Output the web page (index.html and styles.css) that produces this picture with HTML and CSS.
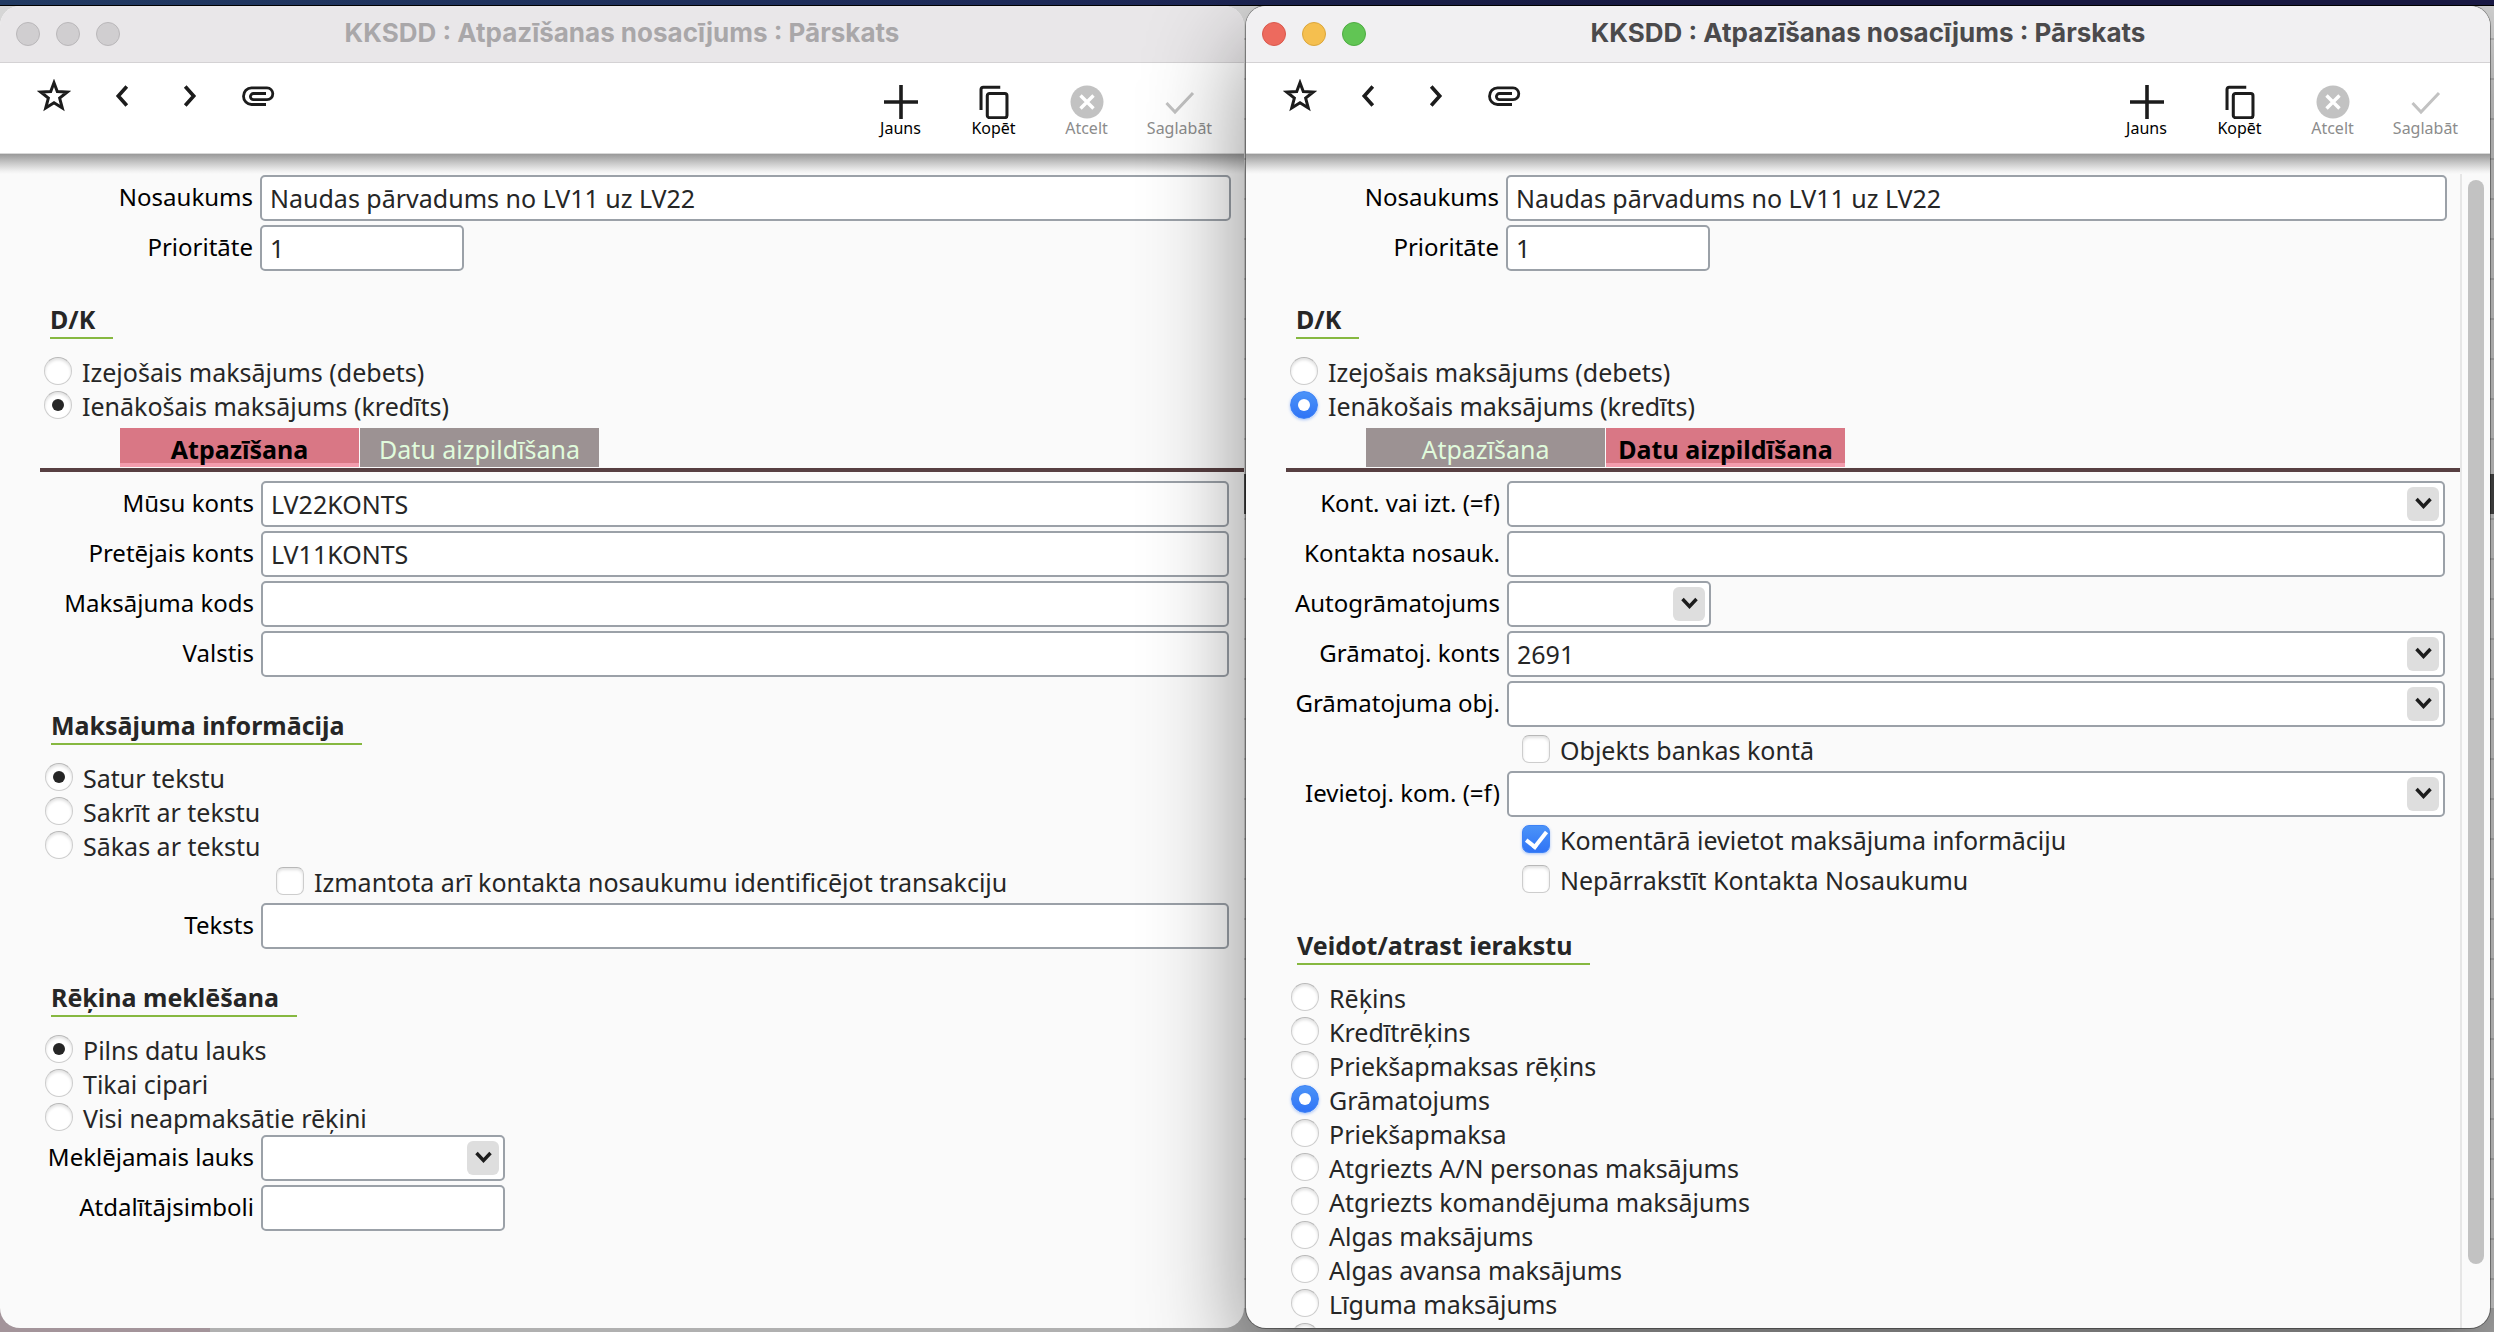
FILE: index.html
```html
<!DOCTYPE html>
<html lang="lv">
<head>
<meta charset="utf-8">
<title>KKSDD : Atpazīšanas nosacījums : Pārskats</title>
<link rel="stylesheet" href="styles.css">
</head>
<body>
<svg class="sprite" aria-hidden="true">
  <symbol id="i-star" viewBox="0 0 32 32"><path d="M16 3.500l3.100 8.300 9.400.4-7.200 5.800 2.500 9.300L16 22.300l-7.800 5 2.500-9.300-7.200-5.800 9.400-.4z" fill="none" stroke="currentColor" stroke-width="2.800"/></symbol>
  <symbol id="i-prev" viewBox="0 0 32 32"><path d="M20.500 7l-8 9 8 9" fill="none" stroke="currentColor" stroke-width="3.400"/></symbol>
  <symbol id="i-next" viewBox="0 0 32 32"><path d="M11.500 7l8 9-8 9" fill="none" stroke="currentColor" stroke-width="3.400"/></symbol>
  <symbol id="i-clip" viewBox="0 0 34 34"><path d="M25 25.500H10.500a8 8.300 0 0 1 0-16.600H26a5.800 5.900 0 0 1 0 11.800H12.500a3 3 0 0 1 0-6.200H25" fill="none" stroke="currentColor" stroke-width="2.800"/></symbol>
  <symbol id="i-plus" viewBox="0 0 36 34"><path d="M18 0v34M1 17h34" fill="none" stroke="currentColor" stroke-width="3.600"/></symbol>
  <symbol id="i-copy" viewBox="0 0 36 38"><path d="M3.500 28V5q0-2.500 2.500-2.500h19" fill="none" stroke="currentColor" stroke-width="3.400"/><rect x="10.500" y="9.500" width="22" height="27" rx="2.500" fill="none" stroke="currentColor" stroke-width="3.400"/></symbol>
  <symbol id="i-cancel" viewBox="0 0 36 34"><circle cx="18" cy="17" r="16.500" fill="currentColor"/><path d="M11.500 10.500l13 13M24.500 10.500l-13 13" stroke="#fff" stroke-width="3.400"/></symbol>
  <symbol id="i-check" viewBox="0 0 36 34"><path d="M4.500 18l8.500 9L31 8" fill="none" stroke="currentColor" stroke-width="3"/></symbol>
  <symbol id="i-down" viewBox="0 0 32 34"><path d="M9.500 12l7 7.500 7-7.500" fill="none" stroke="currentColor" stroke-width="3.400"/></symbol>
</svg>

<main class="desktop">
  <section class="window inactive" aria-label="Atpazīšana">
    <header class="titlebar">
      <div class="lights">
        <button type="button" class="light close" aria-label="Aizvērt"></button>
        <button type="button" class="light minimize" aria-label="Minimizēt"></button>
        <button type="button" class="light maximize" aria-label="Maksimizēt"></button>
      </div>
      <h1 class="title">KKSDD : Atpazīšanas nosacījums : Pārskats</h1>
    </header>
    <nav class="toolbar">
      <div class="tools">
        <button type="button" class="tool" aria-label="Izlase"><svg class="icon"><use href="#i-star"/></svg></button>
        <button type="button" class="tool" aria-label="Iepriekšējais"><svg class="icon"><use href="#i-prev"/></svg></button>
        <button type="button" class="tool" aria-label="Nākamais"><svg class="icon"><use href="#i-next"/></svg></button>
        <button type="button" class="tool" aria-label="Pielikumi"><svg class="icon"><use href="#i-clip"/></svg></button>
      </div>
      <div class="actions">
        <button type="button" class="action"><svg class="action-icon"><use href="#i-plus"/></svg>Jauns</button>
        <button type="button" class="action"><svg class="action-icon"><use href="#i-copy"/></svg>Kopēt</button>
        <button type="button" class="action" disabled><svg class="action-icon"><use href="#i-cancel"/></svg>Atcelt</button>
        <button type="button" class="action" disabled><svg class="action-icon"><use href="#i-check"/></svg>Saglabāt</button>
      </div>
    </nav>
    <div class="body">
      <form class="form">
        <div class="fields">
          <label for="a-name">Nosaukums</label><input class="box" id="a-name" type="text" value="Naudas pārvadums no LV11 uz LV22">
          <label for="a-prio">Prioritāte</label><input class="box short" id="a-prio" type="text" value="1">
        </div>
        <h2 class="heading">D/K</h2>
        <div class="radios">
          <label class="option"><input type="radio" name="a-dk"><span>Izejošais maksājums (debets)</span></label>
          <label class="option"><input type="radio" name="a-dk" checked><span>Ienākošais maksājums (kredīts)</span></label>
        </div>
        <div class="tabs" role="tablist">
          <button type="button" class="tab selected" role="tab" aria-selected="true">Atpazīšana</button>
          <button type="button" class="tab" role="tab" aria-selected="false">Datu aizpildīšana</button>
        </div>
        <div class="panel">
          <div class="fields">
            <label for="a-our">Mūsu konts</label><input class="box" id="a-our" type="text" value="LV22KONTS">
            <label for="a-their">Pretējais konts</label><input class="box" id="a-their" type="text" value="LV11KONTS">
            <label for="a-code">Maksājuma kods</label><input class="box" id="a-code" type="text">
            <label for="a-country">Valstis</label><input class="box" id="a-country" type="text">
          </div>
          <h2 class="heading">Maksājuma informācija</h2>
          <div class="radios">
            <label class="option"><input type="radio" name="a-match" checked><span>Satur tekstu</span></label>
            <label class="option"><input type="radio" name="a-match"><span>Sakrīt ar tekstu</span></label>
            <label class="option"><input type="radio" name="a-match"><span>Sākas ar tekstu</span></label>
          </div>
          <div class="fields">
            <label class="check"><input type="checkbox"><span>Izmantota arī kontakta nosaukumu identificējot transakciju</span></label>
            <label for="a-text">Teksts</label><input class="box" id="a-text" type="text">
          </div>
          <h2 class="heading">Rēķina meklēšana</h2>
          <div class="radios">
            <label class="option"><input type="radio" name="a-inv" checked><span>Pilns datu lauks</span></label>
            <label class="option"><input type="radio" name="a-inv"><span>Tikai cipari</span></label>
            <label class="option"><input type="radio" name="a-inv"><span>Visi neapmaksātie rēķini</span></label>
          </div>
          <div class="fields">
            <label for="a-field">Meklējamais lauks</label>
            <div class="combo medium"><select class="box" id="a-field"><option></option></select><svg class="arrow" aria-hidden="true"><use href="#i-down"/></svg></div>
            <label for="a-sep">Atdalītājsimboli</label><input class="box medium" id="a-sep" type="text">
          </div>
        </div>
      </form>
    </div>
  </section>

  <section class="window active" aria-label="Datu aizpildīšana">
    <header class="titlebar">
      <div class="lights">
        <button type="button" class="light close" aria-label="Aizvērt"></button>
        <button type="button" class="light minimize" aria-label="Minimizēt"></button>
        <button type="button" class="light maximize" aria-label="Maksimizēt"></button>
      </div>
      <h1 class="title">KKSDD : Atpazīšanas nosacījums : Pārskats</h1>
    </header>
    <nav class="toolbar">
      <div class="tools">
        <button type="button" class="tool" aria-label="Izlase"><svg class="icon"><use href="#i-star"/></svg></button>
        <button type="button" class="tool" aria-label="Iepriekšējais"><svg class="icon"><use href="#i-prev"/></svg></button>
        <button type="button" class="tool" aria-label="Nākamais"><svg class="icon"><use href="#i-next"/></svg></button>
        <button type="button" class="tool" aria-label="Pielikumi"><svg class="icon"><use href="#i-clip"/></svg></button>
      </div>
      <div class="actions">
        <button type="button" class="action"><svg class="action-icon"><use href="#i-plus"/></svg>Jauns</button>
        <button type="button" class="action"><svg class="action-icon"><use href="#i-copy"/></svg>Kopēt</button>
        <button type="button" class="action" disabled><svg class="action-icon"><use href="#i-cancel"/></svg>Atcelt</button>
        <button type="button" class="action" disabled><svg class="action-icon"><use href="#i-check"/></svg>Saglabāt</button>
      </div>
    </nav>
    <div class="body">
      <form class="form">
        <div class="fields">
          <label for="b-name">Nosaukums</label><input class="box" id="b-name" type="text" value="Naudas pārvadums no LV11 uz LV22">
          <label for="b-prio">Prioritāte</label><input class="box short" id="b-prio" type="text" value="1">
        </div>
        <h2 class="heading">D/K</h2>
        <div class="radios">
          <label class="option"><input type="radio" name="b-dk"><span>Izejošais maksājums (debets)</span></label>
          <label class="option"><input type="radio" name="b-dk" checked><span>Ienākošais maksājums (kredīts)</span></label>
        </div>
        <div class="tabs" role="tablist">
          <button type="button" class="tab" role="tab" aria-selected="false">Atpazīšana</button>
          <button type="button" class="tab selected" role="tab" aria-selected="true">Datu aizpildīšana</button>
        </div>
        <div class="panel">
          <div class="fields">
            <label for="b-contact">Kont. vai izt. (=f)</label>
            <div class="combo"><select class="box" id="b-contact"><option></option></select><svg class="arrow" aria-hidden="true"><use href="#i-down"/></svg></div>
            <label for="b-cname">Kontakta nosauk.</label><input class="box" id="b-cname" type="text">
            <label for="b-auto">Autogrāmatojums</label>
            <div class="combo short"><select class="box" id="b-auto"><option></option></select><svg class="arrow" aria-hidden="true"><use href="#i-down"/></svg></div>
            <label for="b-acc">Grāmatoj. konts</label>
            <div class="combo"><select class="box" id="b-acc"><option>2691</option></select><svg class="arrow" aria-hidden="true"><use href="#i-down"/></svg></div>
            <label for="b-obj">Grāmatojuma obj.</label>
            <div class="combo"><select class="box" id="b-obj"><option></option></select><svg class="arrow" aria-hidden="true"><use href="#i-down"/></svg></div>
            <label class="check"><input type="checkbox"><span>Objekts bankas kontā</span></label>
            <label for="b-com">Ievietoj. kom. (=f)</label>
            <div class="combo"><select class="box" id="b-com"><option></option></select><svg class="arrow" aria-hidden="true"><use href="#i-down"/></svg></div>
            <label class="check"><input type="checkbox" checked><span>Komentārā ievietot maksājuma informāciju</span></label>
            <label class="check"><input type="checkbox"><span>Nepārrakstīt Kontakta Nosaukumu</span></label>
          </div>
          <h2 class="heading">Veidot/atrast ierakstu</h2>
          <div class="radios">
            <label class="option"><input type="radio" name="b-rec"><span>Rēķins</span></label>
            <label class="option"><input type="radio" name="b-rec"><span>Kredītrēķins</span></label>
            <label class="option"><input type="radio" name="b-rec"><span>Priekšapmaksas rēķins</span></label>
            <label class="option"><input type="radio" name="b-rec" checked><span>Grāmatojums</span></label>
            <label class="option"><input type="radio" name="b-rec"><span>Priekšapmaksa</span></label>
            <label class="option"><input type="radio" name="b-rec"><span>Atgriezts A/N personas maksājums</span></label>
            <label class="option"><input type="radio" name="b-rec"><span>Atgriezts komandējuma maksājums</span></label>
            <label class="option"><input type="radio" name="b-rec"><span>Algas maksājums</span></label>
            <label class="option"><input type="radio" name="b-rec"><span>Algas avansa maksājums</span></label>
            <label class="option"><input type="radio" name="b-rec"><span>Līguma maksājums</span></label>
            <label class="option"><input type="radio" name="b-rec"></label>
          </div>
        </div>
      </form>
      <div class="scrollbar" aria-hidden="true"><div class="thumb"></div></div>
    </div>
  </section>
</main>
</body>
</html>
```

FILE: styles.css
```css
* { box-sizing: border-box; }

body {
  margin: 0;
  font-family: "Noto Sans", "Open Sans", sans-serif;
  font-size: 25px;
  line-height: 30px;
  color: #262626;
}

button, input, select { font: inherit; color: inherit; margin: 0; }
button { border: 0; padding: 0; background: none; }
.sprite { display: none; }

/* Desktop and windows */
.desktop {
  display: grid;
  grid-template-columns: 1fr 1fr;
  grid-template-rows: 1fr;
  gap: 2px;
  height: 100vh;
  padding: 6px 4px 4px 0;
  overflow: hidden;
  background:
    linear-gradient(#000, #000) 0 5px / 100% 1px no-repeat,
    linear-gradient(90deg, #213a62, #1d2a58 40%, #1b1b48 70%, #1b1b48) 0 0 / 100% 5px no-repeat,
    linear-gradient(90deg, #a3949a 210px, #b0b0b0 210px) 0 100% / 100% 24px no-repeat,
    linear-gradient(#4a4a4a, #4a4a4a) 100% 474px / 1260px 40px no-repeat,
    repeating-linear-gradient(#d6d6d6 0 38px, #b8b8b8 38px 40px);
}

.window {
  display: flex;
  flex-direction: column;
  min-width: 0;
  min-height: 0;
  overflow: hidden;
  border-radius: 20px;
  background: #fafafa;
}

.window.active {
  z-index: 1;
  box-shadow: 0 0 0 1px rgba(0, 0, 0, .35), 0 36px 100px rgba(0, 0, 0, .45);
}

.titlebar {
  display: grid;
  grid-template-columns: 1fr auto 1fr;
  align-items: center;
  flex: none;
  height: 57px;
  padding: 0 16px;
  border-bottom: 1px solid #d4d2d4;
  background: #e9e7e9;
}
.active .titlebar { background: #f1f0f2; }

.lights { display: flex; gap: 16px; }
.light {
  width: 24px;
  height: 24px;
  border: 1px solid #b9b7b9;
  border-radius: 50%;
  background: #d0ced0;
}
.active .close { background: #ed6a5e; border-color: #d9584c; }
.active .minimize { background: #f5bf4f; border-color: #dba63c; }
.active .maximize { background: #61c554; border-color: #4eac42; }

.title {
  margin: 0;
  padding-bottom: 2px;
  font-family: Inter, "Noto Sans", sans-serif;
  font-size: 26px;
  font-weight: 700;
  color: #a9a7a9;
}
.active .title { color: #4b4a4c; }

/* Toolbar */
.toolbar {
  display: flex;
  justify-content: space-between;
  flex: none;
  height: 91px;
  padding: 0 18px 0 20px;
  border-bottom: 1px solid #d8d8d8;
  background: #fff;
  color: #1c1c1c;
}
.tools, .actions { display: flex; }
.tool {
  display: grid;
  place-items: center;
  width: 68px;
  height: 66px;
}
.icon { width: 34px; height: 34px; }
.action {
  display: flex;
  flex-direction: column;
  align-items: center;
  width: 93px;
  padding-top: 22px;
  font-size: 16px;
  line-height: 18px;
  color: #000;
}
.action-icon { width: 36px; height: 34px; color: #1c1c1c; }
.action:disabled { color: #8c8c8c; }
.action:disabled .action-icon { color: #c2c2c2; }

/* Form */
.body {
  display: flex;
  flex: 1;
  min-height: 0;
  background: linear-gradient(#999, #c8c8c8 9px, #f0f0f0 17px, #fafafa 20px) 0 0 / 100% 20px no-repeat;
}
.form { flex: 1; min-width: 0; padding-top: 21px; }

.fields {
  display: grid;
  grid-template-columns: 253px 1fr;
  gap: 4px 7px;
  padding-right: 13px;
  align-items: center;
}
.fields > label:not(.check) {
  padding-bottom: 3px;
  font-size: 24px;
  text-align: right;
  white-space: nowrap;
  color: #000;
}

.box {
  display: block;
  width: 100%;
  height: 46px;
  padding: 0 8px;
  border: 2px solid #9ba1a8;
  border-radius: 5px;
  background: #fff;
  outline: 0;
  appearance: none;
}
.short { width: 204px; }
.medium { width: 244px; }

.combo { display: grid; align-items: center; }
.combo > * { grid-area: 1 / 1; }
.arrow {
  justify-self: end;
  width: 32px;
  height: 34px;
  margin-right: 6px;
  border-radius: 6px;
  background: #dedede;
  color: #1c1c1c;
  pointer-events: none;
}

.heading {
  width: fit-content;
  margin: 33px 0 15px 50px;
  padding: 0 18px 3px 0;
  border-bottom: 2px solid #86b840;
  font-size: 25px;
  line-height: 30px;
  font-weight: 700;
}

.radios { padding-left: 44px; }
.option {
  display: flex;
  align-items: center;
  gap: 10px;
  width: fit-content;
  height: 34px;
}
.option span, .check span { padding-top: 1px; }
.check {
  grid-column: 2;
  display: flex;
  align-items: center;
  gap: 10px;
  width: fit-content;
  height: 36px;
  padding-left: 15px;
}

input[type="radio"], input[type="checkbox"] {
  flex: none;
  display: grid;
  place-items: center;
  width: 28px;
  height: 28px;
  border: 1px solid #cdcdcd;
  border-top-color: #b8b8b8;
  background: #fff;
  box-shadow: inset 0 2px 3px rgba(0, 0, 0, .12);
  appearance: none;
}
input[type="radio"] { border-radius: 50%; }
input[type="checkbox"] { border-radius: 7px; }

input[type="radio"]:checked::before {
  content: "";
  width: 12px;
  height: 12px;
  border-radius: 50%;
  background: #262626;
}
.active input:checked {
  border-color: #3d82f6;
  background: linear-gradient(#4b93f8, #3074f6);
  box-shadow: 0 1px 3px rgba(48, 116, 246, .4);
}
.active input[type="radio"]:checked::before { background: #fff; }
input[type="checkbox"]:checked::before {
  content: "";
  width: 9px;
  height: 17px;
  margin-bottom: 4px;
  border: solid #fff;
  border-width: 0 4px 4px 0;
  transform: rotate(38deg);
}

/* Tabs */
.tabs {
  display: flex;
  gap: 1px;
  margin: 6px 0 0 40px;
  padding: 0 0 1px 80px;
  border-bottom: 4px solid #573f41;
}
.tab {
  width: 239px;
  height: 39px;
  padding-top: 2px;
  background: #9c9293;
  color: #e0fbdc;
}
.tab.selected {
  background: #d97785;
  box-shadow: inset 0 -4px #f39cad;
  color: #000;
  font-weight: 700;
}

.panel { padding: 9px 2px 0 1px; }
.panel .radios + .fields { margin-top: 1px; }

/* Scrollbar */
.scrollbar {
  display: flex;
  flex: none;
  width: 30px;
  margin-top: 20px;
  padding: 6px 6px 64px;
  border-left: 2px solid #e6e6e6;
}
.thumb { flex: 1; border-radius: 8px; background: #c2c2c2; }
```
